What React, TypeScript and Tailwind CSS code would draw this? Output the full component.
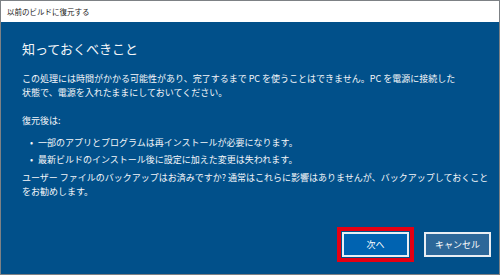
export default function App() {
  return (
    <div className="w-[500px] h-[275px] border border-[#7d8185] flex flex-col font-['Noto_Sans_CJK_JP','Noto_Sans',sans-serif] overflow-hidden">
      <div className="h-[21px] shrink-0 bg-white flex items-center pl-[6px] text-[7.5px] text-[#222]">
        以前のビルドに復元する
      </div>
      <div className="flex-1 bg-[#01508a] flex flex-col pl-[21px] pr-[8px] text-[#f4f6f9]">
        <h1 className="mt-[18px] text-[13px] leading-[18px]">知っておくべきこと</h1>
        <p className="mt-[14px] text-[9px] leading-[14px] whitespace-nowrap">
          この処理には時間がかかる可能性があり、完了するまで PC を使うことはできません。PC を電源に接続した
          <br />
          状態で、電源を入れたままにしておいてください。
        </p>
        <p className="mt-[14px] text-[9px] leading-[14px]">復元後は:</p>
        <ul className="mt-[8px] flex flex-col gap-[3px] text-[9px] leading-[14px]">
          <li className="flex">
            <span className="w-[16px] pl-[8px]">•</span>
            <span>一部のアプリとプログラムは再インストールが必要になります。</span>
          </li>
          <li className="flex">
            <span className="w-[16px] pl-[8px]">•</span>
            <span>最新ビルドのインストール後に設定に加えた変更は失われます。</span>
          </li>
        </ul>
        <p className="mt-[4px] text-[9px] leading-[14px] whitespace-nowrap">
          ユーザー ファイルのバックアップはお済みですか? 通常はこれらに影響はありませんが、バックアップしておくこと
          <br />
          をお勧めします。
        </p>
        <div className="mt-auto mb-[17px] flex justify-end gap-[15px]">
          <button className="relative w-[67px] h-[25px] bg-[#0063b1] border-2 border-[#e9eef4] text-[9px] text-white">
            次へ
            <span className="absolute -inset-[7px] border-[4px] border-[#e60012]" />
          </button>
          <button className="w-[67px] h-[25px] bg-[#2c6799] border-2 border-[#e9eef4] text-[9px] text-white">
            キャンセル
          </button>
        </div>
      </div>
    </div>
  )
}
